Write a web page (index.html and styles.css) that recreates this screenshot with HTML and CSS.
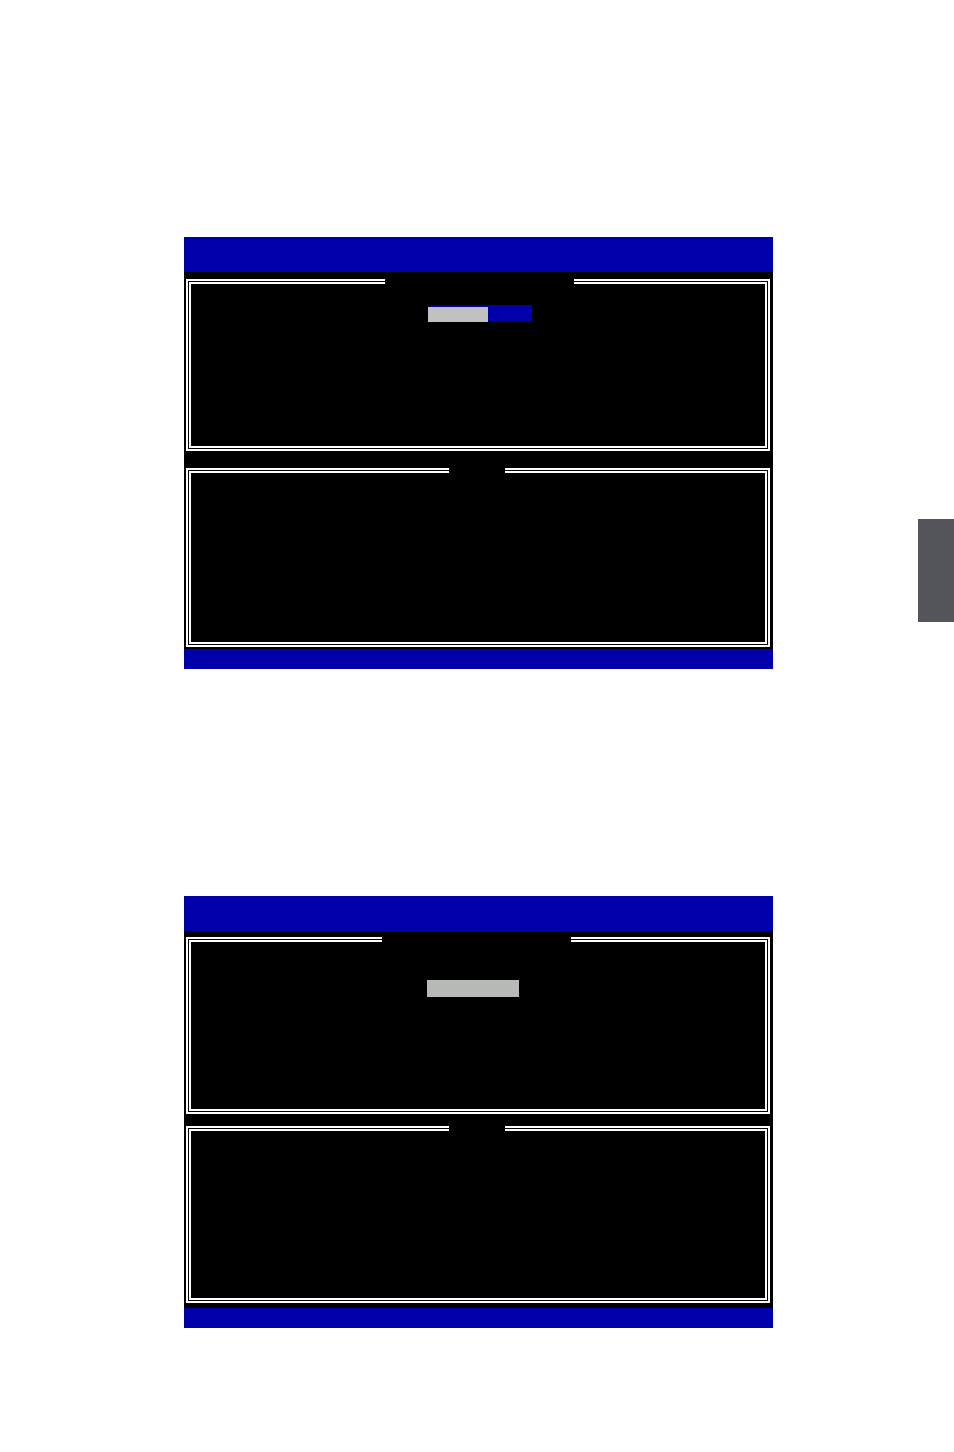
FILE: index.html
```html
<!DOCTYPE html>
<html>
<head>
    <title>Setup</title>
    <meta charset="utf-8">
    <link rel="stylesheet" href="styles.css">
</head>
<body>
<div class="page">
    <div class="screens">
        <!-- écran 1 : champ en cours d'édition -->
        <div class="screen">
            <div class="screen-head"></div>
            <div class="screen-body">
                <div class="panel panel-top">
                    <div class="caption caption-wide"></div>
                    <div class="field">
                        <div class="field-value"></div>
                    </div>
                </div>
                <div class="panel panel-bottom">
                    <div class="caption caption-small"></div>
                </div>
            </div>
            <div class="screen-foot"></div>
        </div>

        <!-- écran 2 : champ sélectionné -->
        <div class="screen screen-second">
            <div class="screen-head"></div>
            <div class="screen-body body-second">
                <div class="panel panel-even">
                    <div class="caption caption-wide caption-left"></div>
                    <div class="selection"></div>
                </div>
                <div class="panel panel-even panel-gap">
                    <div class="caption caption-small"></div>
                </div>
            </div>
            <div class="screen-foot"></div>
        </div>
    </div>
    <div class="side-tab"></div>
</div>
</body>
</html>
```

FILE: styles.css
```css
body {
    margin: 0;
    background-color: #ffffff;
    font-family: "Liberation Sans", Arial, sans-serif;
}
.page {
    display: flex;
    width: 954px;
    min-height: 1452px;
}
.screens {
    margin-left: 184px;
    padding-top: 237px;
    width: 589px;
}
.screen {
    width: 589px;
}
.screen-second {
    margin-top: 227px;
}
.screen-head {
    height: 35px;
    background-color: #0000ab;
}
.screen-foot {
    height: 20px;
    background-color: #0000ab;
}
.screen-body {
    background-color: #000000;
    height: 377px;
    padding: 7px 3px 0 2px;
    box-sizing: border-box;
}
.body-second {
    padding-top: 6px;
}
/* cadre double blanc des panneaux */
.panel {
    border: 5px double #ffffff;
    box-sizing: border-box;
}
.panel-top {
    height: 172px;
}
.panel-bottom {
    height: 179px;
    margin-top: 17px;
}
.panel-even {
    height: 177px;
}
.panel-gap {
    margin-top: 12px;
}
/* coupure du cadre pour le titre */
.caption {
    height: 5px;
    margin-top: -5px;
    background-color: #000000;
}
.caption-wide {
    width: 189px;
    margin-left: 194px;
}
.caption-left {
    margin-left: 191px;
}
.caption-small {
    width: 56px;
    margin-left: 258px;
}
.field {
    width: 103px;
    height: 14px;
    padding-top: 2px;
    margin: 21px 0 0 238px;
    background-color: #0000ab;
}
.field-value {
    width: 60px;
    height: 15px;
    margin-left: -1px;
    background-color: #c0c1c0;
}
.selection {
    width: 92px;
    height: 17px;
    margin: 38px 0 0 236px;
    background-color: #b8bab8;
}
.side-tab {
    margin-left: auto;
    margin-top: 519px;
    width: 36px;
    height: 103px;
    background-color: #55565b;
}
```
